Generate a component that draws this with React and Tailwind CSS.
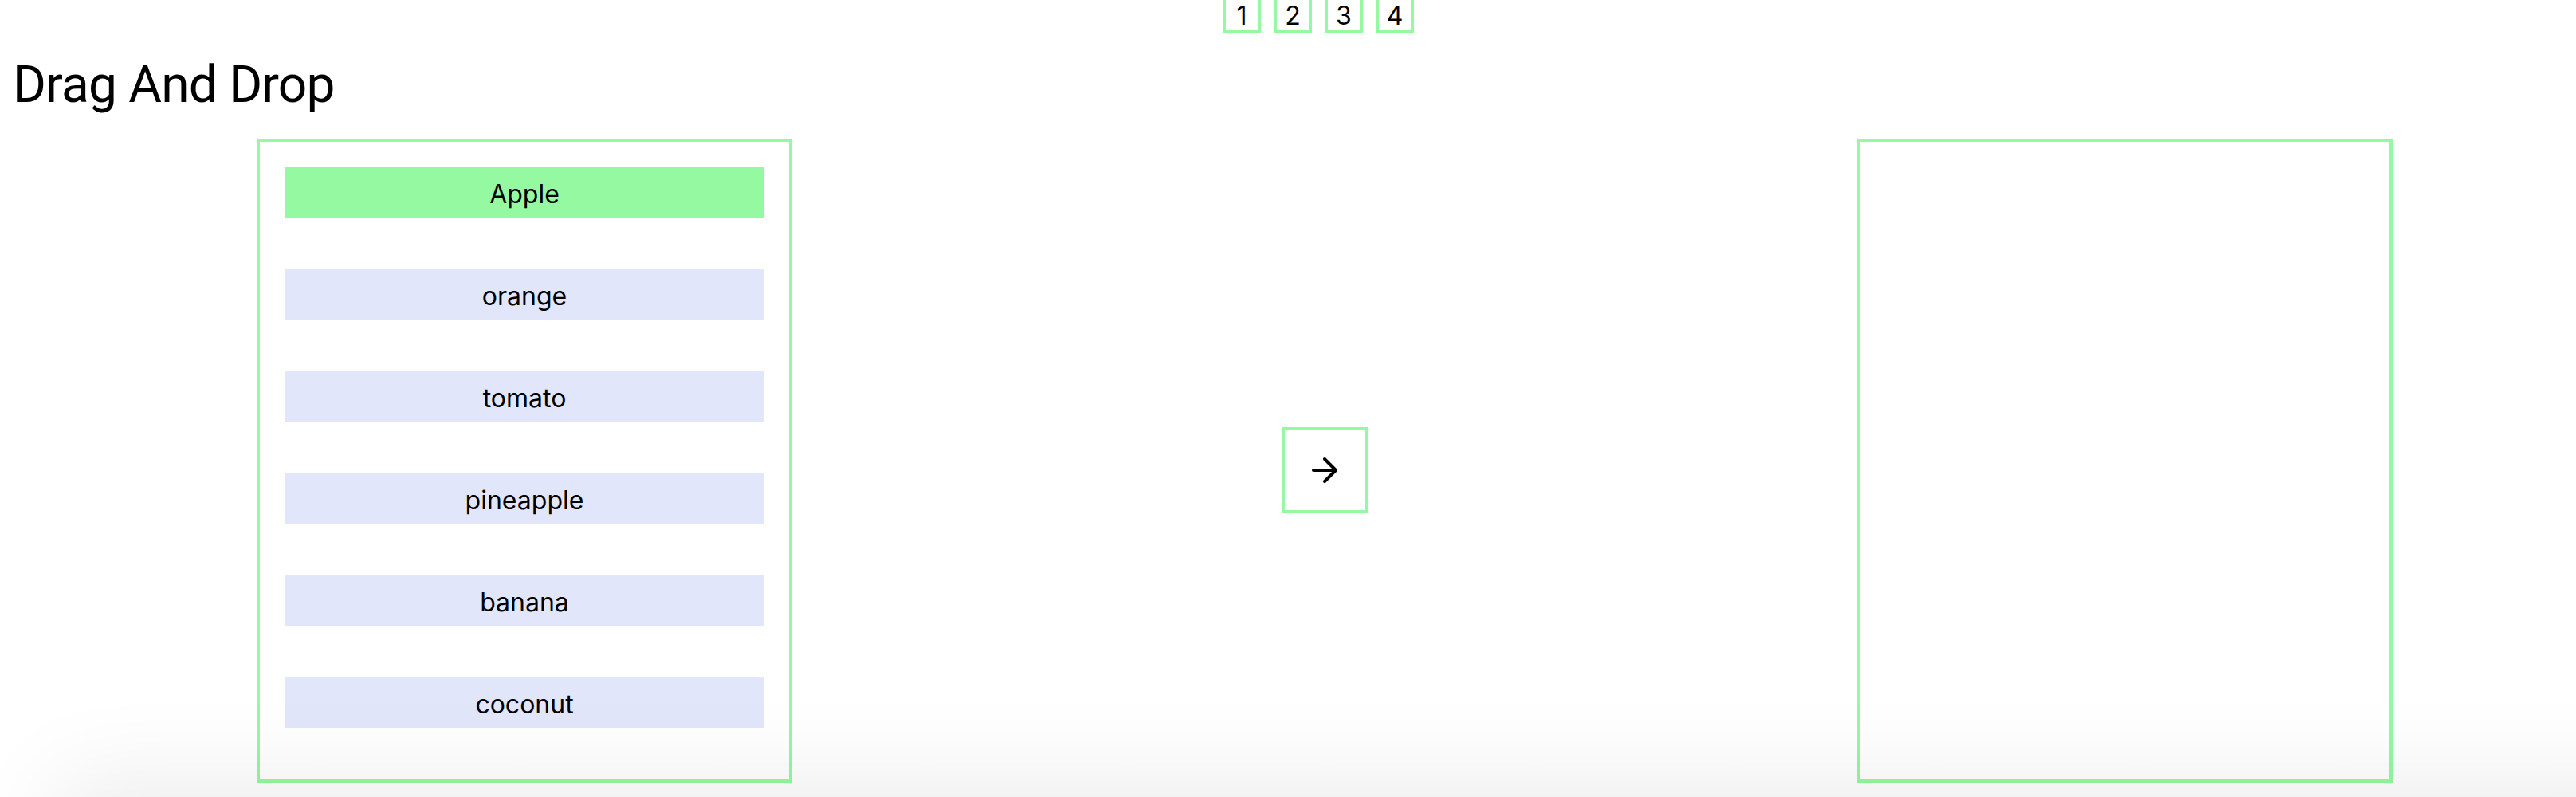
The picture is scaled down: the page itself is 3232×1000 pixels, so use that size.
import { ArrowRight } from 'lucide-react';

const fruits = ['Apple', 'orange', 'tomato', 'pineapple', 'banana', 'coconut'];
const steps = [1, 2, 3, 4];

export default function App() {
  return (
    <div className="min-h-screen bg-white text-black relative overflow-hidden font-['Inter',sans-serif]">
      {/* step tabs */}
      <div className="flex justify-center gap-4 pl-[76px] -mt-[10px]">
        {steps.map((n) => (
          <div
            key={n}
            className="w-[48px] h-[52px] border-4 border-[#94f9a0] flex items-end justify-center pb-[2px]"
          >
            <span className="text-[32px] leading-[32px]">{n}</span>
          </div>
        ))}
      </div>

      <h1 className="mt-[24px] ml-[16px] text-[64px] leading-[77px] font-normal tracking-[-0.012em] font-['Roboto',sans-serif] pt-[2px]">
        Drag And Drop
      </h1>

      {/* board */}
      <div className="flex items-start pl-[322px] gap-[614px] mt-[29px]">
        <div className="w-[672px] h-[808px] border-4 border-[#94f9a0] p-8 flex flex-col gap-16 shrink-0">
          {fruits.map((f, i) => (
            <div
              key={f}
              className={`h-[64px] flex items-center justify-center text-[32px] pt-[3px] ${
                i === 0 ? 'bg-[#94f9a0]' : 'bg-[#e1e6fb]'
              }`}
            >
              {f}
            </div>
          ))}
        </div>

        <button className="mt-[362px] w-[108px] h-[108px] border-4 border-[#94f9a0] flex items-center justify-center shrink-0">
          <ArrowRight size={48} strokeWidth={2} />
        </button>

        <div className="w-[672px] h-[808px] border-4 border-[#94f9a0] shrink-0" />
      </div>

      {/* shadow from the bar sitting just under the fold */}
      <div className="fixed left-[90px] right-[-200px] top-full h-[200px] shadow-[0_0_120px_20px_rgba(0,0,0,0.08)] pointer-events-none" />
    </div>
  );
}
